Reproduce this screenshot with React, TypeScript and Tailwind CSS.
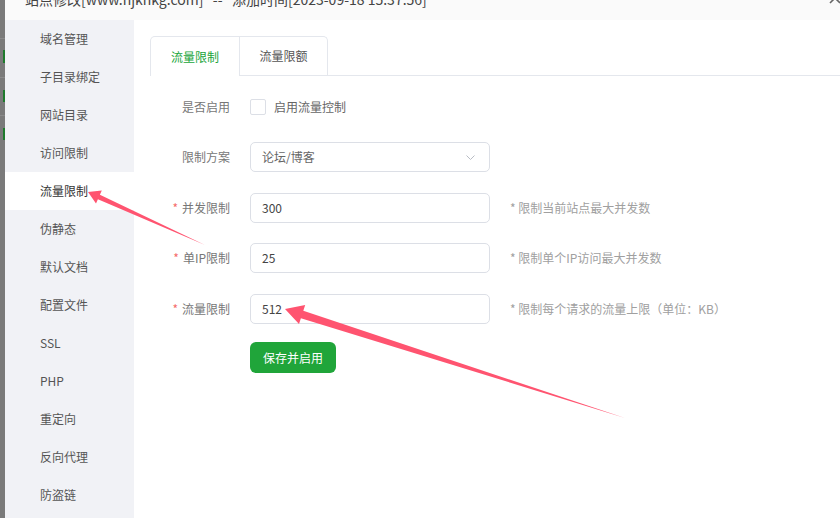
import React from 'react';

const MENU = [
  '域名管理',
  '子目录绑定',
  '网站目录',
  '访问限制',
  '流量限制',
  '伪静态',
  '默认文档',
  '配置文件',
  'SSL',
  'PHP',
  '重定向',
  '反向代理',
  '防盗链',
];

const FIELDS = [
  { label: '并发限制', value: '300', help: '* 限制当前站点最大并发数', mt: 'mt-[21px]' },
  { label: '单IP限制', value: '25', help: '* 限制单个IP访问最大并发数', mt: 'mt-[20px]' },
  { label: '流量限制', value: '512', help: '* 限制每个请求的流量上限（单位：KB）', mt: 'mt-[21px]' },
];

function Arrows() {
  return (
    <svg className="pointer-events-none absolute inset-0" width="840" height="518" viewBox="0 0 840 518">
      {/* sidebar arrow */}
      <polygon points="205,245 99.9,194.7 101.8,190.6 88,192 96,203.4 97.9,199.3" fill="#ff5470" />
      {/* input arrow */}
      <polygon points="625,418 303.3,310.7 305.2,305 285,309 299,324 300.9,318.3" fill="#ff5470" />
    </svg>
  );
}

export default function App() {
  return (
    <div
      className="relative flex h-[518px] w-[840px] overflow-hidden bg-white text-[12px]"
      style={{ fontFamily: '"Noto Sans CJK SC", "Noto Sans", sans-serif' }}
    >
      {/* page behind the dialog */}
      <div className="flex w-[5px] shrink-0 flex-col bg-[#7a7a7a]">
        <div className="mt-[38px] h-px bg-[#8a8a8a]" />
        <div className="ml-[3px] mt-[11px] h-[13px] w-[2px] bg-[#1e7a2c]" />
        <div className="mt-[14px] h-px bg-[#8a8a8a]" />
        <div className="ml-[3px] mt-[12px] h-[12px] w-[2px] bg-[#1e7a2c]" />
        <div className="mt-[13px] h-px bg-[#8a8a8a]" />
        <div className="ml-[3px] mt-[12px] h-[12px] w-[2px] bg-[#1e7a2c]" />
      </div>

      <div className="flex min-w-0 flex-1 flex-col">
        {/* title bar */}
        <div className="flex h-[20px] shrink-0 items-start justify-between overflow-hidden bg-[#fafafa]">
          <div className="-mt-[11px] pl-[20px] text-[14px] leading-[20px] whitespace-pre text-[#444]">
            站点修改[www.hjkhkg.com]   --   添加时间[2023-09-18 15:37:56]
          </div>
          <svg className="-mt-[8px] -mr-[1px]" width="12" height="12" viewBox="0 0 12 12">
            <path d="M1 1l10 10M11 1L1 11" stroke="#666" strokeWidth="1.6" />
          </svg>
        </div>

        <div className="flex min-h-0 flex-1">
          {/* sidebar */}
          <div className="w-[129px] shrink-0 bg-[#f1f2f6]">
            {MENU.map((item) => (
              <div
                key={item}
                className={`flex h-[38px] items-center pl-[35px] ${
                  item === '流量限制' ? 'bg-white text-[#333]' : 'text-[#555]'
                }`}
              >
                {item}
              </div>
            ))}
          </div>

          {/* content */}
          <div className="flex-1 pl-[16px] pt-[16px]">
            <div className="flex h-[40px]">
              <div className="flex rounded-t-[5px] border border-b-0 border-[#e4e7ed]">
                <div className="flex w-[88px] items-center justify-center text-[#20a53a]">流量限制</div>
                <div className="flex w-[88px] items-center justify-center border-b border-l border-[#e4e7ed] text-[#555]">
                  流量限额
                </div>
              </div>
              <div className="flex-1 border-b border-[#e4e7ed]" />
            </div>

            <div className="mt-[16px] flex h-[30px] items-center">
              <div className="w-[100px] pr-[20px] text-right text-[#777]">是否启用</div>
              <div className="h-[16px] w-[16px] rounded-[2px] border border-[#dcdfe6] bg-white" />
              <span className="ml-[8px] text-[#666]">启用流量控制</span>
            </div>

            <div className="mt-[20px] flex h-[30px] items-center">
              <div className="w-[100px] pr-[20px] text-right text-[#777]">限制方案</div>
              <div className="flex h-[30px] w-[240px] items-center justify-between rounded-[5px] border border-[#dcdfe6] pl-[11px] pr-[14px] text-[#666]">
                <span>论坛/博客</span>
                <svg width="9" height="5" viewBox="0 0 9 5">
                  <path d="M0.5 0.5l4 4 4-4" stroke="#b8bcc4" fill="none" strokeWidth="1" />
                </svg>
              </div>
            </div>

            {FIELDS.map((f) => (
              <div key={f.label} className={`${f.mt} flex h-[30px] items-center`}>
                <div className="w-[100px] pr-[20px] text-right text-[#777]">
                  <span className="mr-[4px] text-[#f56c6c]">*</span>
                  {f.label}
                </div>
                <div className="flex h-[30px] w-[240px] items-center rounded-[5px] border border-[#dcdfe6] pl-[11px] text-[#444]">
                  {f.value}
                </div>
                <span className="ml-[20px] text-[#a0a0a0]">{f.help}</span>
              </div>
            ))}

            <div className="mt-[18px] pl-[100px]">
              <button className="h-[31px] w-[86px] rounded-[6px] bg-[#20a53a] text-[12px] text-white">
                保存并启用
              </button>
            </div>
          </div>
        </div>
      </div>

      <Arrows />
    </div>
  );
}
